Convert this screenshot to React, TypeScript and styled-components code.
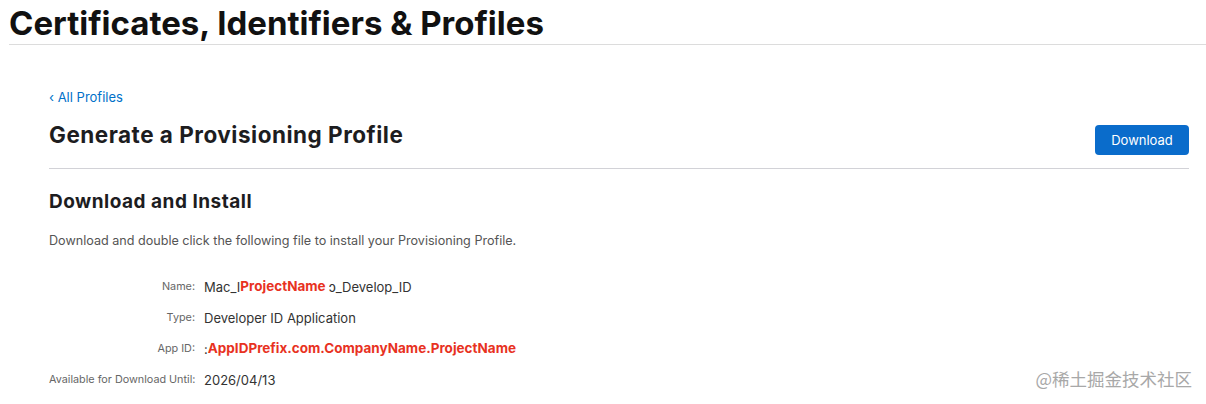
import styled, { createGlobalStyle } from 'styled-components'

const GlobalStyle = createGlobalStyle`
	html, body {
		margin: 0;
		padding: 0;
		background: #fff;
	}
	body {
		font-family: Inter, 'Noto Sans', 'Noto Sans CJK SC', sans-serif;
		color: #1d1d1f;
		width: 1206px;
		height: 404px;
		overflow: hidden;
		position: relative;
	}
`

const Header = styled.header`
	margin-left: 9px;
	height: 44px;
	border-bottom: 1px solid #dcdcdc;
	display: flex;
	align-items: flex-end;
`

const SiteTitle = styled.h1`
	margin: 0 0 1px;
	font-size: 33px;
	font-weight: 700;
	line-height: 40px;
	color: #111;
`

const Main = styled.main`
	padding: 44px 17px 0 49px;
`

const BackLink = styled.a`
	display: block;
	font-size: 13px;
	color: #0070c9;
	text-decoration: none;
	line-height: 16px;
`

const TitleRow = styled.div`
	display: flex;
	align-items: flex-start;
	justify-content: space-between;
	padding: 15px 0 13px;
	border-bottom: 1px solid #d2d2d7;
`

const PageTitle = styled.h2`
	margin: 0;
	font-size: 22.5px;
	font-weight: 700;
	letter-spacing: 0.5px;
	line-height: 30px;
	color: #1d1d1f;
`

const PrimaryButton = styled.button`
	margin-top: 5px;
	font-family: inherit;
	background: #0a6ccb;
	color: #fff;
	border: 0;
	border-radius: 4px;
	width: 94px;
	height: 30px;
	font-size: 13px;
	cursor: pointer;
`

const SectionTitle = styled.h3`
	margin: 20px 0 0;
	font-size: 19px;
	font-weight: 700;
	letter-spacing: 0.5px;
	line-height: 26px;
`

const Description = styled.p`
	margin: 18px 0 0;
	font-size: 12.6px;
	color: #555;
	line-height: 16px;
`

const Details = styled.dl`
	margin: 29px 0 0;
	display: grid;
	grid-template-columns: 146px auto;
	column-gap: 9px;
	row-gap: 13px;
	align-items: center;
`

const Label = styled.dt`
	text-align: right;
	font-size: 10.8px;
	color: #666;
	line-height: 18px;
	white-space: nowrap;
`

const Value = styled.dd`
	margin: 0;
	font-size: 13px;
	color: #333;
	line-height: 18px;
	white-space: nowrap;
`

const Redact = styled.span<{ $gap?: number }>`
	color: #e8321f;
	font-weight: 700;
	font-size: 13.5px;
	background: #fff;
	position: relative;
	top: -1px;
	padding-right: ${({ $gap }) => $gap ?? 0}px;
`

const Watermark = styled.div`
	position: absolute;
	right: 14px;
	bottom: 13px;
	font-size: 17.5px;
	color: #a8a8a8;
	font-family: 'Noto Sans CJK SC', 'Noto Sans', sans-serif;
`

export default function App() {
	return (
		<>
			<GlobalStyle />
			<Header>
				<SiteTitle>Certificates, Identifiers &amp; Profiles</SiteTitle>
			</Header>
			<Main>
				<BackLink href="#">‹ All Profiles</BackLink>
				<TitleRow>
					<PageTitle>Generate a Provisioning Profile</PageTitle>
					<PrimaryButton>Download</PrimaryButton>
				</TitleRow>
				<SectionTitle>Download and Install</SectionTitle>
				<Description>Download and double click the following file to install your Provisioning Profile.</Description>
				<Details>
					<Label>Name:</Label>
					<Value>
						Mac_I<Redact $gap={3}>ProjectName</Redact>ɔ_Develop_ID
					</Value>
					<Label>Type:</Label>
					<Value>Developer ID Application</Value>
					<Label>App ID:</Label>
					<Value>
						:<Redact>AppIDPrefix.com.CompanyName.ProjectName</Redact>
					</Value>
					<Label>Available for Download Until:</Label>
					<Value>2026/04/13</Value>
				</Details>
			</Main>
			<Watermark>@稀土掘金技术社区</Watermark>
		</>
	)
}
